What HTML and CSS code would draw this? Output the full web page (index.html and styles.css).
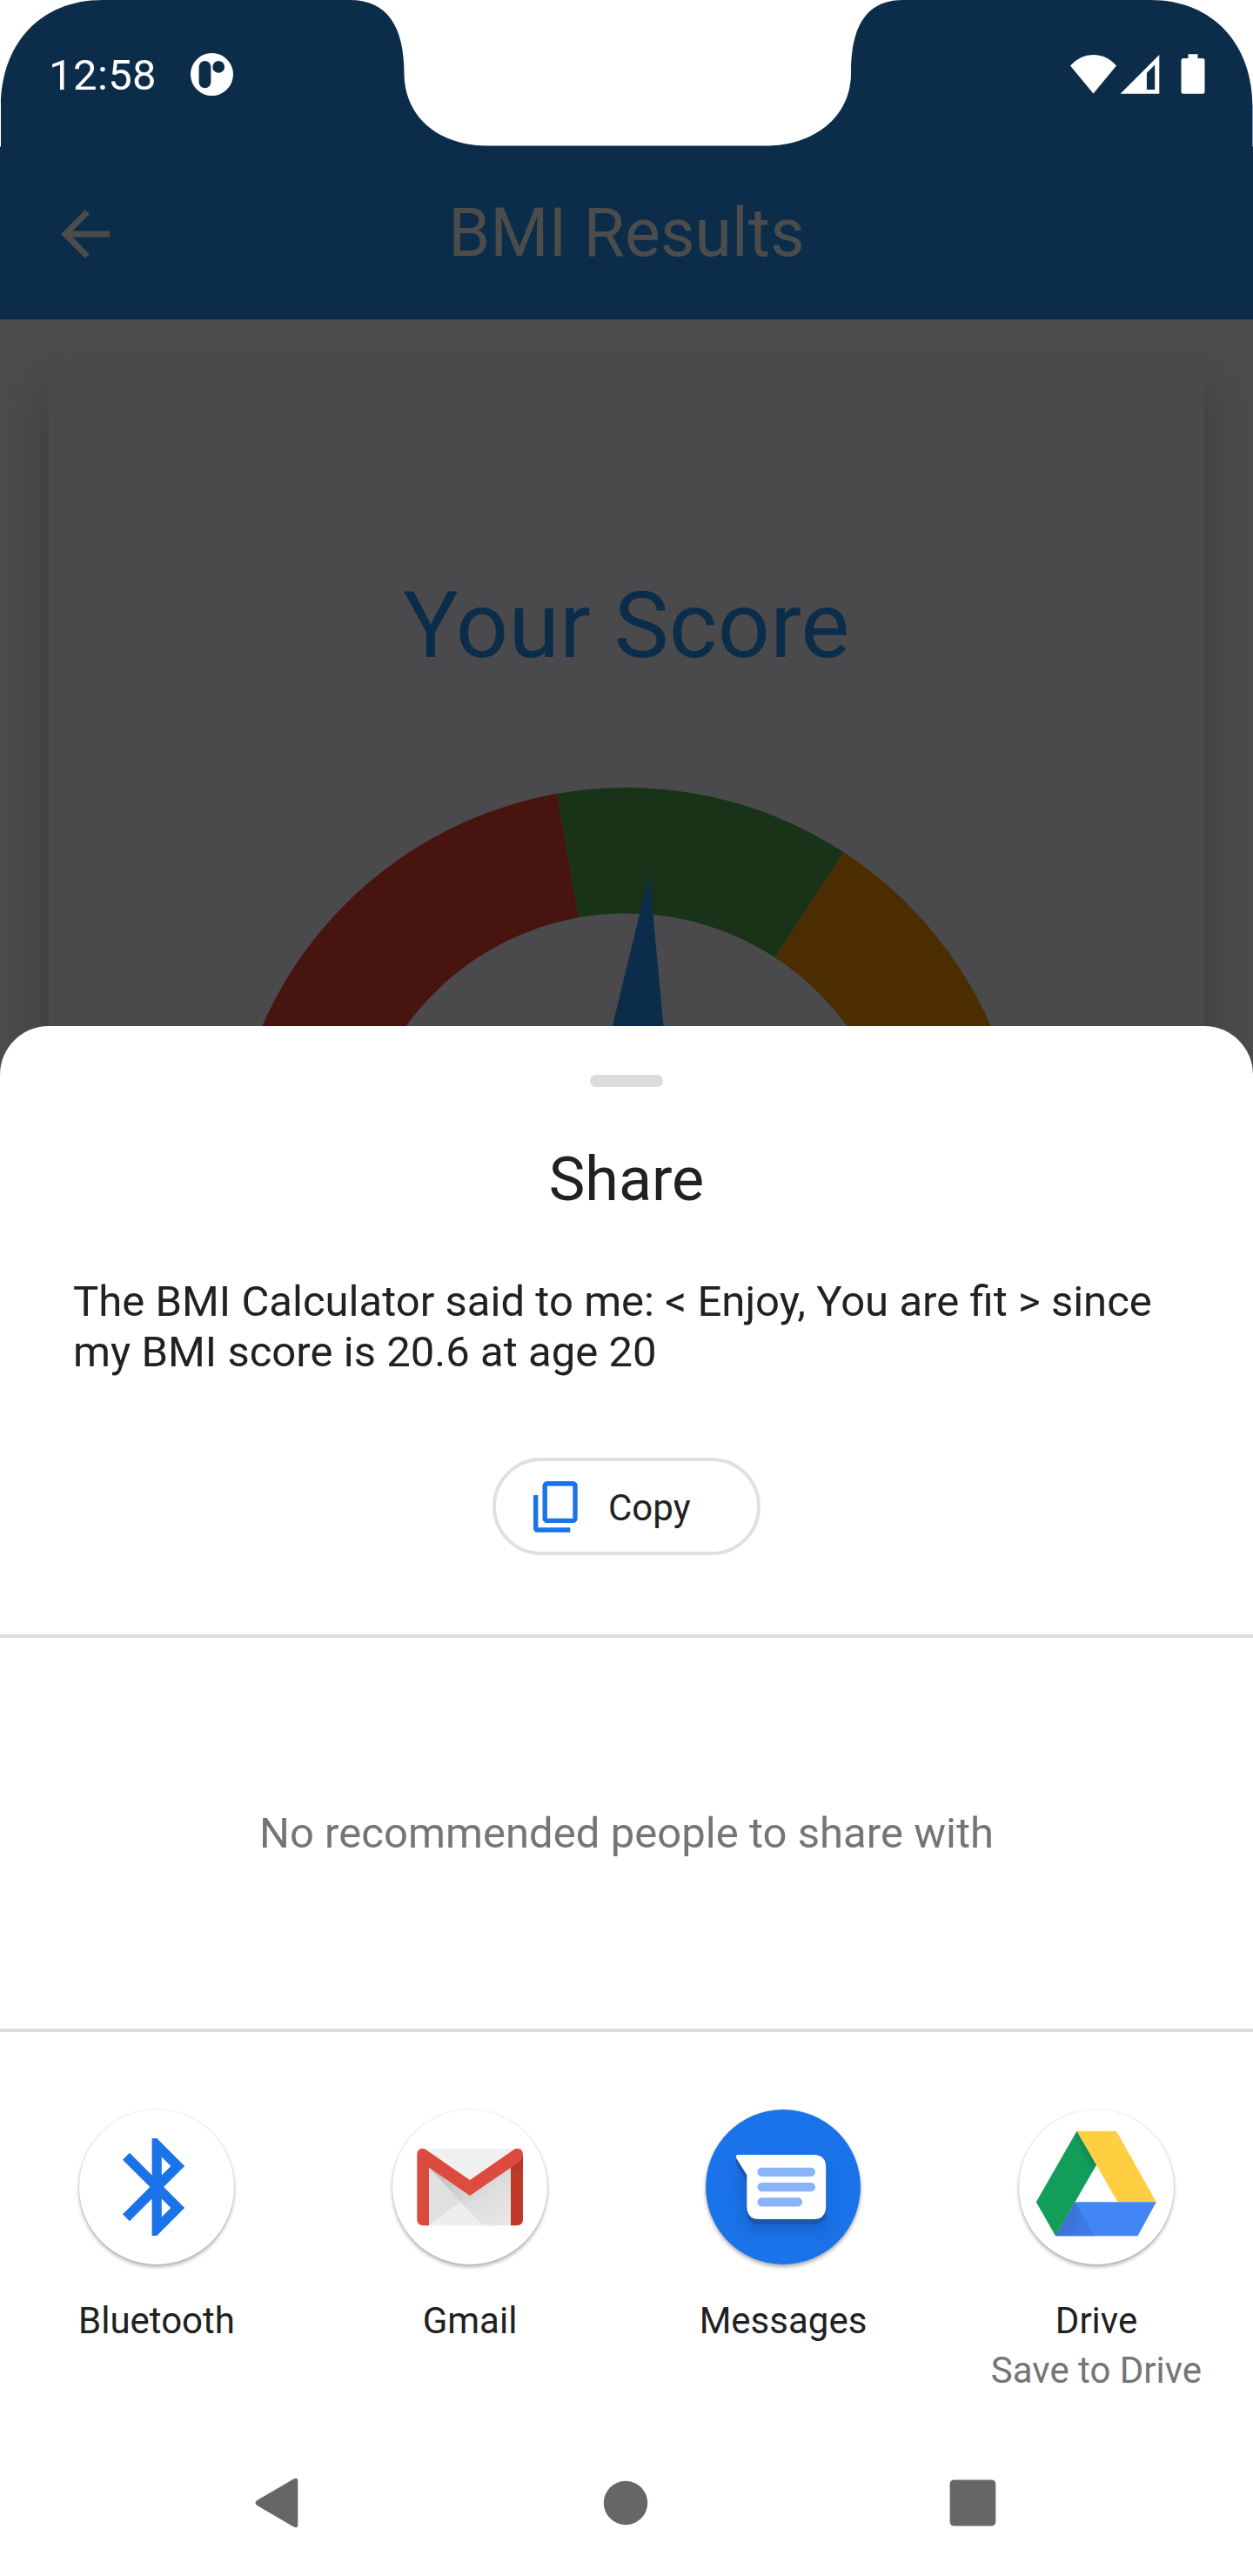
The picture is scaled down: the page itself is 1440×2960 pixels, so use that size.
FILE: index.html
```html
<!DOCTYPE html>
<html lang="en">
<head>
<meta charset="utf-8">
<title>BMI Results</title>
<link rel="stylesheet" href="styles.css">
</head>
<body>
<div class="screen">
  <header class="top">
    <div class="status">
      <div class="status-left">
        <span class="clock">12:58</span>
        <svg class="app-dot" viewBox="0 0 49 49"><path fill="#fff" fill-rule="evenodd" d="M24.5 0a24.5 24.5 0 1 1 0 49a24.5 24.5 0 1 1 0-49zM16.500 9a6.900 6.900 0 0 0-6.900 6.900v17.500a6.900 6.900 0 0 0 13.800 0v-17.500A6.900 6.900 0 0 0 16.500 9zM32.200 9a6.900 6.900 0 1 0 0 13.800a6.900 6.900 0 1 0 0-13.800z"/></svg>
      </div>
      <svg class="status-icons" viewBox="0 0 155 48" fill="#fff"><path d="M0 14.500Q11 2 26.500 2T53 14.500L26.500 46.500z"/><path fill-rule="evenodd" d="M102.300 2v44.700H57.500zM97.200 13.500l-9.300 9.300V42h9.300z"/><path d="M135.500 1.300h11v4.700h5.500q2.500 0 2.500 2.500v35.700q0 2.500-2.500 2.500h-22q-2.500 0-2.500-2.500V8.500q0-2.500 2.500-2.500h5.500z"/></svg>
    </div>
    <div class="appbar">
      <svg class="back" viewBox="0 0 24 24"><path fill="#4c4c4c" d="M20 11H7.830l5.590-5.590L12 4l-8 8 8 8 1.410-1.410L7.830 13H20v-2z"/></svg>
      <h1 class="title">BMI Results</h1>
    </div>
    <svg class="cutout" viewBox="0 0 1440 169" fill="#fff"><path d="M0 0H118C45 0 1 52 1 122V168.500H0z"/><path d="M1440 0H1322C1395 0 1439.500 52 1439.500 122V168.500H1440z"/><path d="M402 0C446 0 464.500 32 464.500 84C464.500 135 505 167.500 560 167.500H880C935 167.500 978 135 978 84C978 32 994 0 1038 0z"/></svg>
  </header>
  <main class="content">
    <section class="card">
      <h2 class="score">Your Score</h2>
      <svg class="gauge" viewBox="263 905 914 457">
        <path fill="#48140f" d="M263 1362A457 457 0 0 1 640 912.100L665.200 1054.300A312.500 312.500 0 0 0 407.500 1362z"/>
        <path fill="#183318" d="M640 912.100A457 457 0 0 1 969.600 979.200L890.700 1100.200A312.500 312.500 0 0 0 665.200 1054.300z"/>
        <path fill="#4c2d00" d="M969.600 979.200A457 457 0 0 1 1177 1362H1032.500A312.500 312.500 0 0 0 890.700 1100.200z"/>
        <path fill="#0b2d49" d="M746 1005L659.500 1362H780z"/>
      </svg>
    </section>
  </main>
  <section class="sheet">
    <div class="handle"></div>
    <h2 class="sheet-title">Share</h2>
    <p class="message">The BMI Calculator said to me: &lt; Enjoy, You are fit &gt; since my BMI score is 20.6 at age 20</p>
    <button class="copy">
      <svg class="copy-icon" viewBox="0 0 51 59" fill="none" stroke="#1a73e8" stroke-width="5.400"><rect x="13.200" y="2.700" width="34.800" height="42.700" rx="2.600"/><path d="M2.700 16V53.700Q2.700 56 5 56H42.300"/></svg>
      <span class="copy-label">Copy</span>
    </button>
    <div class="people">No recommended people to share with</div>
    <div class="apps">
      <div class="app">
        <svg class="icon" viewBox="1 1 178 178"><path fill="#1a73e8" transform="translate(23 22.800) scale(5.600)" d="M17.710 7.710L12 2h-1v7.590L6.410 5 5 6.410 10.590 12 5 17.590 6.410 19 11 14.410V22h1l5.710-5.710-4.300-4.290 4.300-4.290zM13 5.830l1.880 1.880L13 9.590V5.830zm1.880 10.460L13 18.170v-3.760l1.880 1.880z"/></svg>
        <span class="name">Bluetooth</span>
      </div>
      <div class="app">
        <svg class="icon" viewBox="1 1 178 178">
          <defs>
            <linearGradient id="fold" x1="0" y1="0" x2="1" y2="1"><stop offset="0" stop-color="#b8b8b8"/><stop offset=".6" stop-color="#dedede"/><stop offset="1" stop-color="#e8e8e8"/></linearGradient>
            <linearGradient id="bar" x1="0" y1="0" x2="0" y2="1"><stop offset="0" stop-color="#a83529"/><stop offset=".3" stop-color="#c03a2b"/></linearGradient>
          </defs>
          <path fill="#f0f0f0" d="M36 45.700H144V134.300H36z"/>
          <path fill="url(#fold)" d="M43.400 68L90 100L137 68V134.300H104z"/>
          <path fill="#e0e0e0" d="M43.400 68L79 107L43.400 133z"/>
          <path fill="#eee" d="M43.400 134L90 100L79 107.500L105 134.300z"/>
          <path fill="#d84b3d" d="M29.300 54H43V134.300H36.300Q29.300 134.300 29.300 127z"/>
          <path fill="url(#bar)" d="M137 54H151V127Q151 134.300 144 134.300H137z"/>
          <path fill="#dd4b3e" d="M29.300 53Q29.300 45.700 36 45.700Q38 45.700 40 47.500L90 82L140 47.500Q142 45.700 144 45.700Q151 45.700 151 53Q151 57 147 61L90 100L33 61Q29.300 57 29.300 53z"/>
        </svg>
        <span class="name">Gmail</span>
      </div>
      <div class="app">
        <svg class="icon" viewBox="1 1 178 178">
          <defs><filter id="soft" x="-30%" y="-30%" width="160%" height="180%"><feGaussianBlur stdDeviation="8"/></filter></defs>
          <circle cx="90" cy="90" r="89.500" fill="#1a73e8"/>
          <path fill="#185abc" opacity=".6" filter="url(#soft)" d="M38 68H139V140H48z"/>
          <path fill="#1a56b0" d="M36 55V62Q36 65 48.300 84V118Q48.300 133 63 133H125Q139.200 133 139.200 118V80z"/>
          <path fill="#fff" d="M38 53H125Q139.200 53 139.200 67.500V112.500Q139.200 127 125 127H62.500Q48.300 127 48.300 112.500V76.300L36.300 57Q35 53 38 53z"/>
          <g fill="#8ab4f8"><rect x="60.500" y="67.700" width="66.500" height="10.200" rx="5"/><rect x="60.500" y="85" width="66.500" height="10.200" rx="5"/><rect x="60.500" y="102.300" width="51.500" height="10.200" rx="5"/></g>
        </svg>
        <span class="name">Messages</span>
      </div>
      <div class="app">
        <svg class="icon" viewBox="1 1 178 178">
          <defs>
            <linearGradient id="g" gradientUnits="userSpaceOnUse" x1="72" y1="52" x2="84" y2="46"><stop offset="0" stop-color="#129e5a"/><stop offset="1" stop-color="#0f8048"/></linearGradient>
            <linearGradient id="b" gradientUnits="userSpaceOnUse" x1="54" y1="127" x2="78" y2="140"><stop offset="0" stop-color="#3c71d6"/><stop offset="1" stop-color="#3f7cea"/></linearGradient>
          </defs>
          <path fill="#ffce41" d="M67.500 25.700H113L158.800 107.300H114.500z"/>
          <path fill="#4285f6" d="M65.500 107.300H158.800L137.500 146.300H43z"/>
          <path fill="url(#b)" d="M65.500 107.300L88 146.300H43z"/>
          <path fill="url(#g)" d="M67.500 25.700L90 64.700L43 146.300L20.800 107.300z"/>
        </svg>
        <span class="name">Drive</span>
        <span class="sub">Save to Drive</span>
      </div>
    </div>
    <nav class="nav">
      <svg viewBox="0 0 60 60"><path d="M6.500 27L48.500 2.500Q53.300 0 53.300 5V55Q53.300 60 48.500 57.500L6.500 33Q2.500 30 6.500 27z"/></svg>
      <svg viewBox="0 0 60 60"><circle cx="30" cy="30" r="25.200"/></svg>
      <svg viewBox="0 0 60 60"><rect x="3.600" y="3.400" width="52.700" height="53.200" rx="5"/></svg>
    </nav>
  </section>
</div>
</body>
</html>
```

FILE: styles.css
```css
* { box-sizing: border-box; margin: 0; padding: 0; }
body { font-family: Roboto, sans-serif; font-weight: 400; background: #fff; }
svg { display: block; flex: none; }
.screen { position: relative; width: 1440px; height: 2960px; overflow: hidden; background: #4d4a4d; display: flex; flex-direction: column; }
.top { position: relative; height: 367px; flex: none; background: #0b2d49; }
.status { display: flex; justify-content: space-between; height: 169px; padding: 61px 55px 0 56px; }
.status-left { display: flex; gap: 39px; }
.clock { font-size: 49px; line-height: 58px; height: 49px; margin-top: -3px; color: #fff; width: 124px; letter-spacing: .4px; }
.app-dot { width: 49px; height: 49px; }
.status-icons { width: 155px; height: 48px; }
.appbar { display: grid; grid-template-columns: 84px 1fr 84px; align-items: center; height: 198px; padding: 0 56px; }
.back { width: 84px; height: 84px; margin-top: 2px; }
.title { font-size: 77px; font-weight: 400; line-height: 90px; text-align: center; color: #4c4c4c; }
.cutout { position: absolute; left: 0; top: 0; width: 1440px; height: 169px; }
.content { height: 868px; flex: none; padding: 56px 56px 0; overflow: hidden; }
.card { height: 1100px; background: #4a4a4c; box-shadow: 0 30px 44px rgba(0,0,0,.22); display: flex; flex-direction: column; align-items: center; padding-top: 234px; }
.score { font-size: 106px; font-weight: 400; line-height: 124px; color: #0b2d49; letter-spacing: .2px; }
.gauge { width: 914px; height: 457px; margin-top: 124px; }
.sheet { position: relative; flex: 1; margin-top: -56px; background: #fff; border-radius: 56px 56px 0 0; display: flex; flex-direction: column; align-items: center; color: #212121; }
.handle { width: 84px; height: 14px; margin-top: 56px; border-radius: 7px; background: #dcdcdc; }
.sheet-title { font-size: 70px; font-weight: 400; line-height: 82px; margin-top: 65px; }
.message { width: 1272px; margin-top: 71px; font-size: 49px; line-height: 57.500px; word-spacing: .15px; }
.copy { display: flex; align-items: center; gap: 35px; width: 308px; height: 112px; margin-top: 93px; padding-left: 43px; border: 4px solid #e0e0e0; border-radius: 56px; background: #fff; font: 400 42px/49px Roboto, sans-serif; color: #212121; }
.copy-icon { width: 51px; height: 59px; }
.copy-label { margin-top: 3px; }
.people { width: 100%; height: 457px; flex: none; margin-top: 91px; border-top: 4px solid #dcdce0; border-bottom: 4px solid #dcdce0; display: flex; align-items: center; justify-content: center; font-size: 49px; letter-spacing: .04px; color: #757575; }
.apps { width: 100%; display: grid; grid-template-columns: repeat(4, 1fr); padding-top: 88px; height: 465px; flex: none; }
.app { display: flex; flex-direction: column; align-items: center; font-size: 42px; line-height: 57px; }
.icon { width: 178px; height: 178px; margin: 1px 0 36px; border-radius: 50%; background: #fff; box-shadow: 0 3px 4px rgba(0,0,0,.3), 0 0 2px rgba(0,0,0,.14); }
.sub { color: #757575; }
.nav { width: 1440px; display: flex; justify-content: space-between; padding: 46px 292px 0 289px; fill: #666; }
.nav svg { width: 60px; height: 60px; }
```
